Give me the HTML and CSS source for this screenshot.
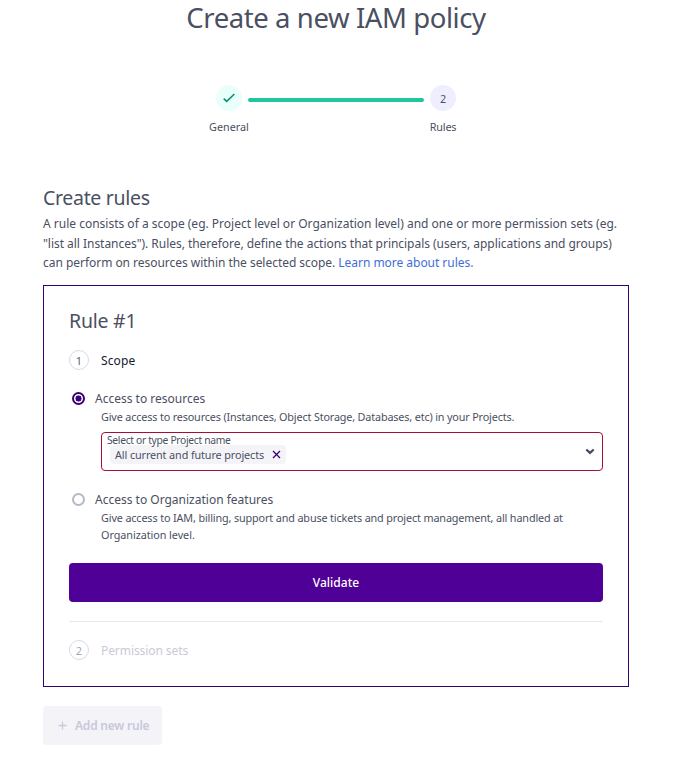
FILE: index.html
```html
<!DOCTYPE html>
<html lang="en">
<head>
<meta charset="utf-8">
<title>Create a new IAM policy</title>
<link rel="stylesheet" href="styles.css">
</head>
<body>
<main class="page">
  <h1 class="title"><span>Create a new IAM policy</span></h1>
  <div class="stepper">
    <div class="step">
      <span class="step-dot done"><svg width="14" height="12" viewBox="0 0 14 12"><path d="M1.7 6.6 4.7 9.4 12.4 2"/></svg></span>
      <span class="step-label">General</span>
    </div>
    <div class="step-line"></div>
    <div class="step">
      <span class="step-dot">2</span>
      <span class="step-label rules">Rules</span>
    </div>
  </div>
  <h2 class="heading"><span>Create rules</span></h2>
  <p class="intro">
    <span class="l1">A rule consists of a scope (eg. Project level or Organization level) and one or more permission sets (eg.</span>
    <span class="l2">"list all Instances"). Rules, therefore, define the actions that principals (users, applications and groups)</span>
    <span class="l3">can perform on resources within the selected scope. <a>Learn more about rules.</a></span>
  </p>
  <section class="card">
    <h2 class="card-title"><span>Rule #1</span></h2>
    <div class="section-head"><span class="num">1</span><span class="scope">Scope</span></div>
    <div class="option first"><span class="radio checked"></span><span class="opt-a">Access to resources</span></div>
    <p class="hint"><span class="h1">Give access to resources (Instances, Object Storage, Databases, etc) in your Projects.</span></p>
    <div class="select">
      <div class="select-body">
        <div class="select-label"><span>Select or type Project name</span></div>
        <div class="tag"><span>All current and future projects</span><svg width="9" height="9" viewBox="0 0 9 9"><path d="M1 1 8 8M8 1 1 8"/></svg></div>
      </div>
      <svg class="chevron" width="10" height="7" viewBox="0 0 10 7"><path d="M1.3 1.5 5 4.9 8.7 1.5"/></svg>
    </div>
    <div class="option second"><span class="radio"></span><span class="opt-b">Access to Organization features</span></div>
    <p class="hint"><span class="h2">Give access to IAM, billing, support and abuse tickets and project management, all handled at</span><span class="h3">Organization level.</span></p>
    <button class="validate"><span>Validate</span></button>
    <div class="section-head disabled"><span class="num">2</span><span class="perm">Permission sets</span></div>
  </section>
  <button class="add"><svg width="9" height="9" viewBox="0 0 9 9"><path d="M4.5 .5v8M.5 4.5h8"/></svg><span>Add new rule</span></button>
</main>
</body>
</html>
```
FILE: styles.css
```css
* { box-sizing: border-box; }
body { margin: 0; background: #fff; color: #4a4f62; font-family: "Noto Sans", "Open Sans", sans-serif; }
h1, h2, p { margin: 0; font-weight: 400; }
svg { fill: none; flex: none; }
button { border: 0; font: inherit; }
span, a { white-space: nowrap; }
.page { width: 586px; margin-left: 43px; display: flex; flex-direction: column; }
.title { height: 36px; line-height: 36px; font-size: 27.5px; text-align: center; }
.title span { letter-spacing: -0.42px; }
.stepper { display: flex; justify-content: center; margin-top: 49px; height: 50px; }
.step { width: 26px; display: flex; flex-direction: column; align-items: center; font-size: 10.8px; }
.step-dot { width: 26px; height: 26px; border-radius: 50%; background: #eeeeff; display: flex; align-items: center; justify-content: center; }
.step-dot.done { background: #e8fffb; }
.step-dot svg { stroke: #108b70; stroke-width: 1.5; }
.step-label { margin-top: 8px; line-height: 16px; }
.rules { letter-spacing: -0.15px; }
.step-line { width: 176px; height: 4px; border-radius: 2px; background: #20c6a0; margin: 13px 6px 0; }
.heading { margin-top: 49px; height: 28px; line-height: 28px; font-size: 19.5px; letter-spacing: -0.32px; }
.intro { margin-top: 2px; font-size: 12px; }
.intro span { display: block; height: 19.5px; line-height: 19.5px; }
.intro .l2 { letter-spacing: -0.035px; }
.intro .l3 { letter-spacing: -0.035px; }
.intro a { color: #3f6ed8; }
.card { margin-top: 12.5px; height: 402px; border: 1px solid #34006e; padding: 21px 25px 0; }
.card-title { height: 28px; line-height: 28px; font-size: 19.5px; letter-spacing: -0.25px; }
.section-head { display: flex; align-items: center; gap: 12px; height: 20px; margin-top: 15px; font-size: 12px; color: #151a2d; }
.scope { letter-spacing: 0.1px; }
.num { width: 20px; height: 20px; border: 1px solid #d9dae8; border-radius: 50%; display: flex; align-items: center; justify-content: center; font-size: 11px; color: #5c6072; }
.option { display: flex; align-items: center; height: 20px; padding-left: 3px; gap: 10px; font-size: 12px; }
.option.first { margin-top: 18px; }
.option.second { margin-top: 18px; }
.radio { width: 13px; height: 13px; border: 2px solid #b5b7c8; border-radius: 50%; }
.radio.checked { border-color: #3c0075; background: radial-gradient(circle, #3c0075 0 2.8px, #fff 3.3px); }
.hint { padding-left: 32px; font-size: 10.8px; }
.hint span { display: block; height: 17px; line-height: 17px; }
.hint .h1 { letter-spacing: -0.15px; }
.hint .h2 { letter-spacing: -0.13px; }
.hint .h3 { letter-spacing: -0.05px; }
.select { margin: 7px 0 0 32px; height: 39px; border: 1px solid #a90c34; border-radius: 4px; display: flex; align-items: center; justify-content: space-between; padding: 0 7px 0 5px; }
.select-body { height: 37px; padding-top: 2px; }
.select-label { height: 10px; line-height: 10px; font-size: 10.3px; letter-spacing: -0.32px; }
.tag { width: 176px; height: 19px; margin-left: 3px; padding: 0 5px; display: flex; align-items: center; justify-content: space-between; background: #f4f4f8; border-radius: 4px; font-size: 10.8px; letter-spacing: -0.1px; line-height: 17px; }
.tag span { padding-bottom: 1px; }
.tag svg { stroke: #3c0075; stroke-width: 1.3; }
.chevron { stroke: #484c5f; stroke-width: 2.3; }
.validate { display: block; width: 100%; height: 39px; margin-top: 20px; border-radius: 4px; background: #4f0097; color: #fff; font-size: 12px; font-weight: 500; text-align: center; padding: 0; }
.disabled { margin-top: 19px; padding-top: 18px; height: 39px; border-top: 1px solid #e7e8ef; color: #c9cad8; }
.disabled .num { color: #a5a8bb; }
.perm { letter-spacing: -0.08px; }
.add { width: 119px; height: 39px; margin-top: 19px; padding: 0 0 0 15px; display: flex; align-items: center; gap: 8px; background: #f4f4f8; border-radius: 4px; color: #c7c9d8; font-size: 12px; font-weight: 600; letter-spacing: -0.22px; }
.add svg { stroke: #c7c9d8; stroke-width: 1.3; }
```
